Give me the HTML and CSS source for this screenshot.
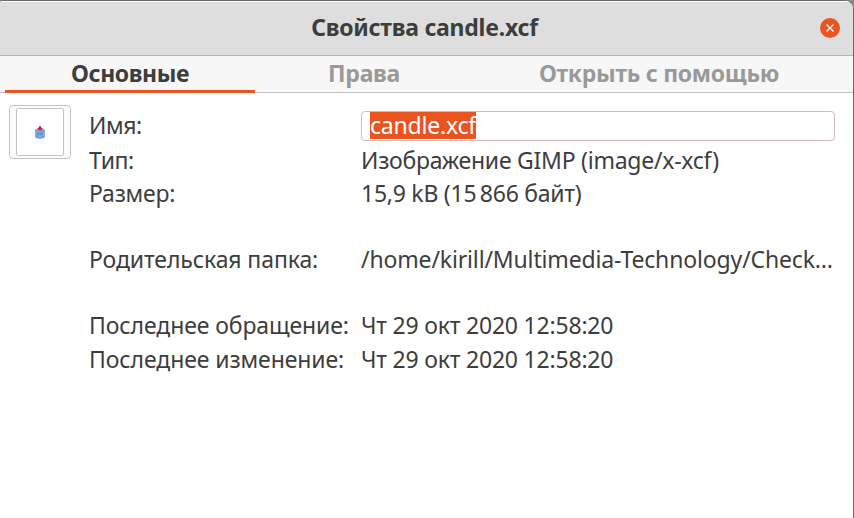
FILE: index.html
```html
<!DOCTYPE html>
<html lang="ru">
<head>
<meta charset="utf-8">
<title>Свойства candle.xcf</title>
<link rel="stylesheet" href="styles.css">
</head>
<body>
<main class="window">
  <header class="titlebar">
    <h1 class="title">Свойства candle.xcf</h1>
    <button class="close" aria-label="Закрыть">
      <svg viewBox="0 0 20 20" width="20" height="20"><path d="M6.5 6.5l7 7M13.5 6.5l-7 7"/></svg>
    </button>
  </header>
  <nav class="tabs">
    <a class="tab tab-basic active">Основные</a>
    <a class="tab tab-rights">Права</a>
    <a class="tab tab-open">Открыть с помощью</a>
  </nav>
  <section class="content">
    <div class="icon-button">
      <div class="thumb">
        <svg viewBox="0 0 12 14" width="12" height="14">
          <path class="wax" d="M1.4 5C1.4 3.2 10.6 3.2 10.6 5V12C10.6 13.9 1.4 13.9 1.4 12Z"/>
          <path class="drip" d="M2.5 9.6L4.5 8.6L6 9.6L9.2 7.4"/>
          <path class="flame" d="M6 0.6L8 3.2C8.6 6 3.4 6 4 3.2Z"/>
        </svg>
      </div>
    </div>
    <dl class="props">
      <dt class="tight">Имя:</dt><dd class="entry"><span class="selection">candle.xcf</span></dd>
      <dt class="tight">Тип:</dt><dd class="type">Изображение GIMP (image/x-xcf)</dd>
      <dt class="size">Размер:</dt><dd class="size">15,9 kB (15&#8201;866 байт)</dd>
      <dt>Родительская папка:</dt><dd class="path">/home/kirill/Multimedia-Technology/Check…</dd>
      <dt>Последнее обращение:</dt><dd class="date">Чт 29 окт 2020 12:58:20</dd>
      <dt>Последнее изменение:</dt><dd class="date">Чт 29 окт 2020 12:58:20</dd>
    </dl>
  </section>
</main>
</body>
</html>
```

FILE: styles.css
```css
* { box-sizing: border-box; }
body { margin: 0; background: #8b8989; font-family: "Noto Sans", sans-serif; font-size: 23px; color: #3d3d3d; }
.window { height: 518px; background: #fff; border-top: 1px solid #6b6969; border-right: 1px solid #6b6969; border-radius: 3px 9px 0 0; overflow: hidden; }
.titlebar { height: 55px; display: grid; grid-template-columns: 849px; align-items: center; background: #dedede; border-top: 1px solid #fff; border-bottom: 1px solid #b6b6b6; padding-bottom: 2px; }
.title { grid-area: 1 / 1; justify-self: center; margin: 0; padding-bottom: 2px; font-size: 23px; line-height: 32px; letter-spacing: -.24px; white-space: nowrap; }
.close { grid-area: 1 / 1; justify-self: end; margin-right: 9px; width: 20px; height: 20px; padding: 0; border: 0; border-radius: 50%; background: #e95420; }
.close svg { display: block; fill: none; stroke: #fff; stroke-width: 1.4; }
.tabs { height: 37px; display: flex; padding-left: 5px; background: #f7f7f7; border-bottom: 1px solid #c0c0c0; font-weight: 700; letter-spacing: -.29px; color: #999; white-space: nowrap; }
.tab { height: 37px; line-height: 34px; text-align: center; }
.tab-basic { width: 250px; }
.tab-rights { width: 218px; }
.tab-open { width: 372px; }
.active { color: #3d3d3d; letter-spacing: -.4px; border-bottom: 3px solid #e95420; }
.content { display: flex; gap: 18px; padding: 12px 18px 0 9px; }
.icon-button { width: 62px; height: 54px; border: 1px solid #c4c4c4; border-radius: 4px; background: #fbfbfb; padding: 2px 6px; }
.thumb { width: 48px; height: 48px; border: 1px solid #c4c4c4; border-radius: 2px; background: #fff; display: grid; place-items: center; }
.thumb svg { display: block; }
.wax { fill: #7ba3df; stroke: #7098cf; stroke-width: .6; }
.drip { fill: none; stroke: #41689f; stroke-width: .6; }
.flame { fill: #e01b2b; }
.props { flex: 1; margin: 6px 0 0; display: grid; grid-template-columns: 272px 474px; grid-template-rows: 30px 34px 33px 66px 66px 34px; line-height: 30px; letter-spacing: -.1px; white-space: nowrap; }
dt, dd { margin: 0; align-self: end; }
dt:first-child { padding-bottom: 2px; line-height: 28px; }
.tight { letter-spacing: -.4px; }
.type, .size { letter-spacing: -.25px; }
.path { letter-spacing: -.15px; }
.date { letter-spacing: -.2px; }
.entry { height: 30px; display: flex; border: 1px solid #cdbdb8; border-radius: 4px; padding-left: 8px; }
.selection { height: 27px; line-height: 26px; letter-spacing: -.2px; background: #e95420; color: #fff; }
```
